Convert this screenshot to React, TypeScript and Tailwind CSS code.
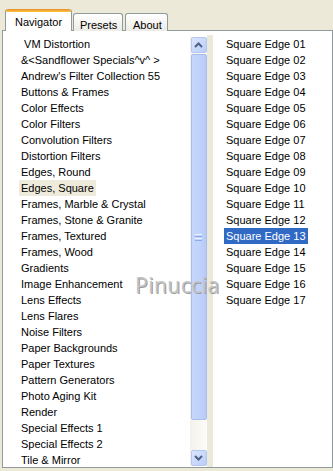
const categories = [
  '\u00a0VM Distortion',
  '&<Sandflower Specials^v^ >',
  "Andrew's Filter Collection 55",
  'Buttons & Frames',
  'Color Effects',
  'Color Filters',
  'Convolution Filters',
  'Distortion Filters',
  'Edges, Round',
  'Edges, Square',
  'Frames, Marble & Crystal',
  'Frames, Stone & Granite',
  'Frames, Textured',
  'Frames, Wood',
  'Gradients',
  'Image Enhancement',
  'Lens Effects',
  'Lens Flares',
  'Noise Filters',
  'Paper Backgrounds',
  'Paper Textures',
  'Pattern Generators',
  'Photo Aging Kit',
  'Render',
  'Special Effects 1',
  'Special Effects 2',
  'Tile & Mirror',
];

const effects = Array.from({ length: 17 }, (_, i) => `Square Edge ${String(i + 1).padStart(2, '0')}`);

function Chevron({ down }: { down?: boolean }) {
  return (
    <svg width="9" height="6" viewBox="0 0 9 6" className={down ? 'rotate-180' : ''}>
      <path d="M1 5 L4.5 1.5 L8 5" fill="none" stroke="#4D6185" strokeWidth="2" />
    </svg>
  );
}

function ScrollButton({ down }: { down?: boolean }) {
  return (
    <div className="h-[16px] w-[16px] rounded-[2px] border border-[#B4C6F2] bg-linear-to-br from-[#DCE6FD] to-[#B9CDFA] flex items-center justify-center">
      <Chevron down={down} />
    </div>
  );
}

function Scrollbar() {
  return (
    <div className="w-[17px] mt-[2px] mb-[1px] bg-linear-to-r from-[#F3F1EA] to-[#FDFCF9] flex flex-col items-center pt-0">
      <ScrollButton />
      <div className="mt-px h-[366px] w-[16px] rounded-[2px] border border-[#A9BEEF] bg-linear-to-r from-[#C6D6FC] via-[#C1D3FB] to-[#B6CAF8] flex items-center justify-center">
        <div className="flex flex-col gap-px">
          <div className="h-px w-[7px] bg-[#EEF3FE]" />
          <div className="h-px w-[7px] bg-[#8DAAF0]" />
          <div className="h-px w-[7px] bg-[#EEF3FE]" />
          <div className="h-px w-[7px] bg-[#8DAAF0]" />
        </div>
      </div>
      <div className="flex-1" />
      <ScrollButton down />
    </div>
  );
}

export default function App() {
  return (
    <div
      className="relative w-[333px] h-[471px] overflow-hidden bg-[#ECE9D8] text-[11px] text-black"
      style={{ fontFamily: '"Liberation Sans", Arial, sans-serif' }}
    >
      {/* tabs */}
      <div className="relative z-10 flex items-end h-[31px] pl-[5px] -mb-px">
        <div className="h-[22px] w-[67px] bg-white border-x border-[#919B9C] rounded-t-[3px] overflow-hidden flex flex-col">
          <div className="h-[3px] bg-linear-to-b from-[#E68B2C] to-[#FFC73C]" />
          <div className="flex-1 flex items-start pl-[9px] pt-[2px]">Navigator</div>
        </div>
        <div className="ml-px h-[18px] w-[50px] border border-b-0 border-[#919B9C] rounded-t-[3px] bg-linear-to-b from-white to-[#ECEBE6] pl-[6px] pt-[3px]">
          Presets
        </div>
        <div className="ml-[2px] h-[18px] w-[43px] border border-b-0 border-[#919B9C] rounded-t-[3px] bg-linear-to-b from-white to-[#ECEBE6] pl-[7px] pt-[3px]">
          About
        </div>
      </div>

      {/* panel */}
      <div className="ml-[2px] w-[331px] h-[438px] border border-[#919B9C] bg-white flex pt-[4px] overflow-hidden">
        <div className="w-[187px] pt-px overflow-hidden">
          {categories.map((c) => (
            <div key={c} className="h-[16px] pl-[16px] flex">
              <span
                className={`px-[2px] leading-[16px] whitespace-pre ${c === 'Edges, Square' ? 'bg-[#EFEBDC]' : ''}`}
              >
                {c}
              </span>
            </div>
          ))}
        </div>
        <Scrollbar />
        <div className="w-[6px] bg-[#ECE9D8]" />
        <div className="w-[118px] pt-px">
          {effects.map((e) => (
            <div key={e} className="h-[16px] pl-[11px] flex">
              <span
                className={`px-[2px] leading-[16px] ${e === 'Square Edge 13' ? 'bg-[#316AC5] text-white' : ''}`}
              >
                {e}
              </span>
            </div>
          ))}
        </div>
      </div>

      {/* watermark */}
      <div
        className="absolute left-[135px] top-[270px] text-[21px] text-[#C4C4C4] pointer-events-none tracking-[0.5px]"
        style={{ fontFamily: '"Open Sans", sans-serif', textShadow: '1px 1px 0 #9a9a9a' }}
      >
        Pinuccia
      </div>
    </div>
  );
}
